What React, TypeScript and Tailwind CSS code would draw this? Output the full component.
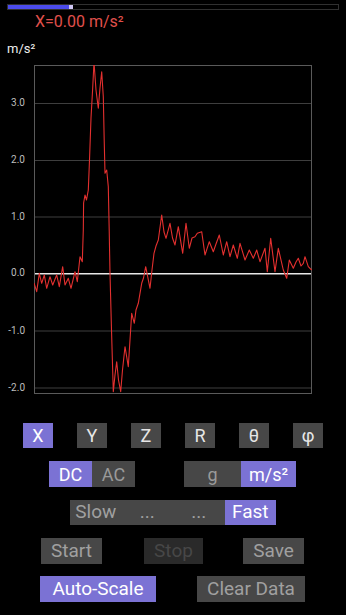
import React from 'react';

const PURPLE = 'bg-[#7b72d4]';
const GRAY = 'bg-[#474747]';

// waveform traced in page coordinates (y = 273.5 - 57 * value)
const wave: [number, number][] = [
  [34, 283], [36.7, 291.7], [39.3, 273.3], [41.7, 283.3], [44.3, 275], [46.7, 288.3],
  [50, 276.7], [52.7, 285], [56.7, 275], [59.3, 286.7], [62.7, 266.7], [65, 285],
  [68.3, 278.3], [71, 288.3], [75, 271.7], [77.3, 281.7], [80, 256.7], [82.3, 261.7],
  [83.3, 230], [83.6, 203], [85, 195], [86.5, 200], [88.3, 190], [89.5, 160],
  [91, 118], [92.7, 88], [94, 62], [96, 90], [98.3, 108.3], [100, 88], [101.7, 71.7],
  [103.3, 96.7], [104.2, 140], [105, 173.3], [106.7, 170], [108.3, 186.7], [109.2, 230],
  [110, 273.3], [111.5, 330], [113.3, 391.7], [115, 375], [116.7, 361.7], [118.5, 380],
  [120.7, 391.7], [122.5, 370], [125, 346.7], [128.3, 366.7], [131.7, 313.3], [134.3, 323.3],
  [136, 310], [138.3, 303.3], [141.7, 283.3], [143.5, 278], [145.7, 266.7], [150, 288.3],
  [152, 270], [154, 253.3], [156, 246], [158.3, 240], [161.7, 215], [164, 232], [166, 238.3],
  [170, 223.3], [172.5, 238], [175, 245], [178.3, 226.7], [182.7, 253.3], [186, 223.3],
  [189.3, 248.3], [192, 238], [195, 236.7], [197.3, 233.3], [201.7, 231.7], [205, 255],
  [209.3, 241.7], [213.3, 251.7], [216, 244], [219.3, 235], [223.3, 255], [226.7, 241.7],
  [230, 256.7], [233.3, 245], [237.3, 258.3], [240, 243.3], [245, 260], [249.3, 250],
  [253.3, 258.3], [256.7, 250], [260, 261.7], [265, 248.3], [267.3, 271.7], [270.7, 238.3],
  [275, 271.7], [278.3, 248.3], [283.3, 270], [286.7, 278.3], [289.3, 260], [293.3, 268.3],
  [296, 262], [298.3, 258.3], [301, 266], [303.3, 263.3], [305, 256.7], [308.3, 266.7],
  [311.7, 270],
];

const gridLines = [
  { y: 103.5, label: '3.0' },
  { y: 160.5, label: '2.0' },
  { y: 217, label: '1.0' },
  { y: 331, label: '-1.0' },
  { y: 388, label: '-2.0' },
];

const Chart: React.FC = () => (
  <svg width={346} height={340} viewBox="0 60 346 340" className="block mt-[3px]">
    <defs>
      <clipPath id="plot">
        <rect x={34} y={65} width={278} height={329} />
      </clipPath>
    </defs>
    <rect x={34.5} y={65.5} width={277} height={328} fill="none" stroke="#5a5a5a" strokeWidth={1} />
    {gridLines.map((g) => (
      <g key={g.label}>
        <line x1={35} x2={311} y1={g.y} y2={g.y} stroke="#3e3e3e" strokeWidth={1} />
        <text
          x={25}
          y={g.y}
          textAnchor="end"
          dominantBaseline="middle"
          fontSize={10}
          fill="#bdbdbd"
          fontFamily="Roboto, sans-serif"
        >
          {g.label}
        </text>
      </g>
    ))}
    <line x1={35} x2={311} y1={273.8} y2={273.8} stroke="#e8e8e8" strokeWidth={1.5} />
    <text
      x={25}
      y={273.8}
      textAnchor="end"
      dominantBaseline="middle"
      fontSize={10}
      fill="#bdbdbd"
      fontFamily="Roboto, sans-serif"
    >
      0.0
    </text>
    <polyline
      clipPath="url(#plot)"
      points={wave.map(([x, y]) => `${x},${y}`).join(' ')}
      fill="none"
      stroke="#e3302f"
      strokeWidth={1.1}
      strokeLinejoin="round"
    />
  </svg>
);

const Btn: React.FC<{ label: string; className: string }> = ({ label, className }) => (
  <div className={`flex items-center justify-center h-full ${className}`}>{label}</div>
);

const App: React.FC = () => {
  const axes = ['X', 'Y', 'Z', 'R', 'θ', 'φ'];

  return (
    <div className="w-[346px] h-[615px] bg-black overflow-hidden font-['Roboto',sans-serif] flex flex-col">
      {/* progress */}
      <div className="mt-[4px] mx-[7px] h-[6px] border border-[#303030] bg-black flex">
        <div className="w-[61px] h-full bg-[#4b4bea]" />
        <div className="w-[4px] h-full bg-[#cfc6f3]" />
      </div>

      <div className="mt-[2px] ml-[35px] h-[20px] leading-[20px] text-[16px] text-[#e0504c]">X=0.00 m/s²</div>
      <div className="mt-[9px] ml-[7px] h-[16px] leading-[16px] text-[13px] text-[#eeeeee]">m/s²</div>

      <Chart />

      {/* axis buttons */}
      <div className="mt-[23px] h-[25px] px-[11px] grid grid-cols-6">
        {axes.map((a, i) => (
          <div key={a} className="flex justify-center">
            <div
              className={`w-[30px] h-[25px] flex items-center justify-center text-[18px] ${
                i === 0 ? `${PURPLE} text-white` : `${GRAY} text-[#e6e6e6]`
              }`}
            >
              {a}
            </div>
          </div>
        ))}
      </div>

      {/* DC / AC, g / m/s² */}
      <div className="mt-[13px] h-[26px] pl-[49px] flex gap-[49px] text-[18px]">
        <div className="flex h-full">
          <Btn label="DC" className={`w-[43px] ${PURPLE} text-white`} />
          <Btn label="AC" className={`w-[43px] ${GRAY} text-[#9a9a9a]`} />
        </div>
        <div className="flex h-full">
          <Btn label="g" className={`w-[57px] ${GRAY} text-[#9a9a9a]`} />
          <Btn label="m/s²" className={`w-[55px] ${PURPLE} text-white`} />
        </div>
      </div>

      {/* speed */}
      <div className="mt-[13px] h-[25px] pl-[70px] flex text-[19px]">
        <div className={`flex h-full w-[206px] ${GRAY}`}>
          <div className="flex-1 flex items-center justify-center text-[#a0a0a0]">Slow</div>
          <div className="flex-1 flex items-center justify-center text-[#a0a0a0]">...</div>
          <div className="flex-1 flex items-center justify-center text-[#a0a0a0]">...</div>
          <div className={`flex-1 flex items-center justify-center text-white ${PURPLE}`}>Fast</div>
        </div>
      </div>

      {/* start / stop / save */}
      <div className="mt-[13px] h-[26px] pl-[41px] flex text-[19px]">
        <Btn label="Start" className={`w-[61px] ${GRAY} text-[#a0a0a0]`} />
        <Btn label="Stop" className="w-[59px] ml-[42px] bg-[#2a2a2a] text-[#474747]" />
        <Btn label="Save" className={`w-[61px] ml-[40px] ${GRAY} text-[#a0a0a0]`} />
      </div>

      {/* auto-scale / clear */}
      <div className="mt-[12px] h-[26px] pl-[40px] flex text-[19px]">
        <Btn label="Auto-Scale" className={`w-[116px] ${PURPLE} text-white`} />
        <Btn label="Clear Data" className={`w-[108px] ml-[41px] ${GRAY} text-[#a0a0a0]`} />
      </div>
    </div>
  );
};

export default App;
